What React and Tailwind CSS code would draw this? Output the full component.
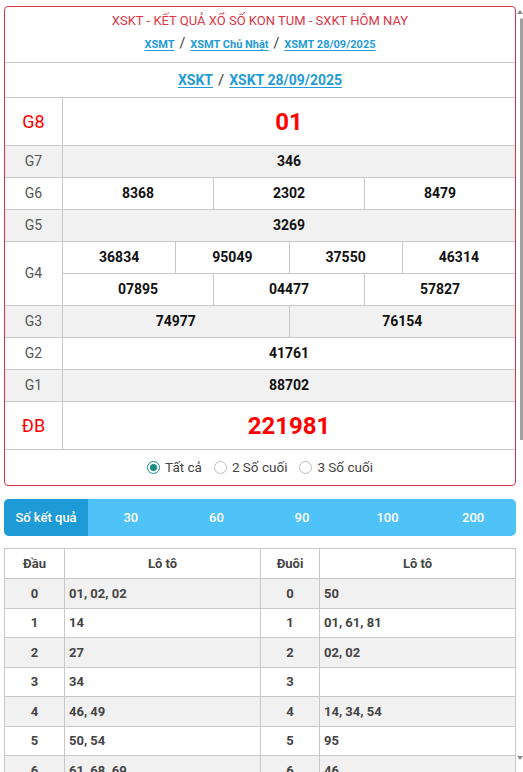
import React from "react";

const Link = ({ children }) => (
  <a href="#" className="text-[#1f9bd7] underline underline-offset-2">{children}</a>
);

const Sep = ({ size }) => <span className={"mx-[5px] text-[#333] font-normal " + size}>/</span>;

const Label = ({ children, red }) => (
  <div
    className={
      "w-[58px] shrink-0 border-r border-[#c8c8c8] flex items-center justify-center " +
      (red ? "text-[18px] text-[#ff0000]" : "text-[14px] text-[#555]")
    }
  >
    {children}
  </div>
);

const Cells = ({ nums, big }) => (
  <div className="flex-1 flex">
    {nums.map((n, i) => (
      <div
        key={i}
        className={
          "flex-1 flex items-center justify-center font-bold " +
          (i > 0 ? "border-l border-[#c8c8c8] " : "") +
          (big ? "text-[24px] text-[#ff0000]" : "text-[14px] text-[#111]")
        }
      >
        {n}
      </div>
    ))}
  </div>
);

const Row = ({ label, nums, gray, h, big, red }) => (
  <div className={"flex border-t border-[#c8c8c8] " + h + " " + (gray ? "bg-[#f1f1f1]" : "bg-white")}>
    <Label red={red}>{label}</Label>
    <Cells nums={nums} big={big} />
  </div>
);

const Radio = ({ checked, children }) => (
  <label className="flex items-center gap-[5px]">
    <span
      className={
        "w-[13px] h-[13px] rounded-full flex items-center justify-center border " +
        (checked ? "border-[#1a8a84] border-[1.5px]" : "border-[#bdbdbd]")
      }
    >
      {checked && <span className="w-[7px] h-[7px] rounded-full bg-[#1a8a84]" />}
    </span>
    <span>{children}</span>
  </label>
);

const dau = [
  ["0", "01, 02, 02"],
  ["1", "14"],
  ["2", "27"],
  ["3", "34"],
  ["4", "46, 49"],
  ["5", "50, 54"],
  ["6", "61, 68, 69"],
  ["7", "77, 77, 79"],
  ["8", "81"],
  ["9", "95"],
];
const duoi = [
  ["0", "50"],
  ["1", "01, 61, 81"],
  ["2", "02, 02"],
  ["3", ""],
  ["4", "14, 34, 54"],
  ["5", "95"],
  ["6", "46"],
  ["7", "27, 77, 77"],
  ["8", "68"],
  ["9", "49, 69, 79"],
];

export default function App() {
  return (
    <div className="h-[772px] overflow-y-scroll bg-white font-[Roboto,sans-serif]">
      <div className="pt-[6px] pl-[4px] pb-[40px]">
        {/* Result card */}
        <div className="w-[512px] rounded-[4px] border border-[#dc3545] overflow-hidden">
          <div className="pt-[4px] pb-[7px] text-center">
            <h1 className="text-[13px] leading-[20px] text-[#dc3545] font-normal">
              XSKT - KẾT QUẢ XỔ SỐ KON TUM - SXKT HÔM NAY
            </h1>
            <div className="mt-[2px] text-[11px] leading-[20px] font-bold">
              <Link>XSMT</Link>
              <Sep size="text-[14px]" />
              <Link>XSMT Chủ Nhật</Link>
              <Sep size="text-[14px]" />
              <Link>XSMT 28/09/2025</Link>
            </div>
          </div>
          <div className="h-[35px] border-t border-[#c8c8c8] flex items-center justify-center text-[14px] font-bold">
            <Link>XSKT</Link>
            <Sep size="text-[15px]" />
            <Link>XSKT 28/09/2025</Link>
          </div>

          <Row label="G8" nums={["01"]} h="h-[48px]" big red />
          <Row label="G7" nums={["346"]} h="h-[32px]" gray />
          <Row label="G6" nums={["8368", "2302", "8479"]} h="h-[32px]" />
          <Row label="G5" nums={["3269"]} h="h-[32px]" gray />
          <div className="flex border-t border-[#c8c8c8] h-[64px] bg-white">
            <Label>G4</Label>
            <div className="flex-1 flex flex-col">
              <div className="h-[31px] flex">
                <Cells nums={["36834", "95049", "37550", "46314"]} />
              </div>
              <div className="h-[32px] flex border-t border-[#c8c8c8]">
                <Cells nums={["07895", "04477", "57827"]} />
              </div>
            </div>
          </div>
          <Row label="G3" nums={["74977", "76154"]} h="h-[32px]" gray />
          <Row label="G2" nums={["41761"]} h="h-[32px]" />
          <Row label="G1" nums={["88702"]} h="h-[32px]" gray />
          <Row label="ĐB" nums={["221981"]} h="h-[48px]" big red />

          <div className="h-[36px] border-t border-[#c8c8c8] flex items-center justify-center gap-[12px] text-[13.5px] text-[#444]">
            <Radio checked>Tất cả</Radio>
            <Radio>2 Số cuối</Radio>
            <Radio>3 Số cuối</Radio>
          </div>
        </div>

        {/* Number of results bar */}
        <div className="mt-[13px] w-[512px] h-[37px] rounded-[5px] bg-[#4fc3f7] flex overflow-hidden text-white text-[13px] font-medium">
          <div className="w-[84px] bg-[#1e9ad6] flex items-center justify-center">Số kết quả</div>
          {["30", "60", "90", "100", "200"].map((n) => (
            <div key={n} className="flex-1 flex items-center justify-center">
              {n}
            </div>
          ))}
        </div>

        {/* Loto table */}
        <div className="mt-[12px] w-[512px] border border-[#c8c8c8] text-[13px] font-bold text-[#444]">
          <div className="grid grid-cols-[60px_196px_59px_1fr] h-[29px] bg-white">
            <div className="border-r border-[#c8c8c8] flex items-center justify-center">Đầu</div>
            <div className="border-r border-[#c8c8c8] flex items-center justify-center">Lô tô</div>
            <div className="border-r border-[#c8c8c8] flex items-center justify-center">Đuôi</div>
            <div className="flex items-center justify-center">Lô tô</div>
          </div>
          {dau.map((d, i) => (
            <div
              key={i}
              className={
                "grid grid-cols-[60px_196px_59px_1fr] h-[29.5px] border-t border-[#c8c8c8] " +
                (i % 2 === 0 ? "bg-[#f1f1f1]" : "bg-white")
              }
            >
              <div className="border-r border-[#c8c8c8] flex items-center justify-center">{d[0]}</div>
              <div className="border-r border-[#c8c8c8] flex items-center pl-[4px]">{d[1]}</div>
              <div className="border-r border-[#c8c8c8] flex items-center justify-center">{duoi[i][0]}</div>
              <div className="flex items-center pl-[4px]">{duoi[i][1]}</div>
            </div>
          ))}
        </div>
      </div>

      {/* Scrollbar overlay */}
      <div className="fixed top-0 right-0 w-[6px] h-[772px] bg-white pointer-events-none">
        <svg className="absolute top-[10px] right-[0px]" width="6" height="4" viewBox="0 0 6 4">
          <polygon points="3,0 6,4 0,4" fill="#8a8a8a" />
        </svg>
        <div className="absolute top-[18px] right-0 w-[3px] h-[422px] rounded-t-[2px] bg-[#a0a0a0]" />
        <svg className="absolute top-[756px] right-[0px]" width="6" height="4" viewBox="0 0 6 4">
          <polygon points="0,0 6,0 3,4" fill="#8a8a8a" />
        </svg>
      </div>
    </div>
  );
}
